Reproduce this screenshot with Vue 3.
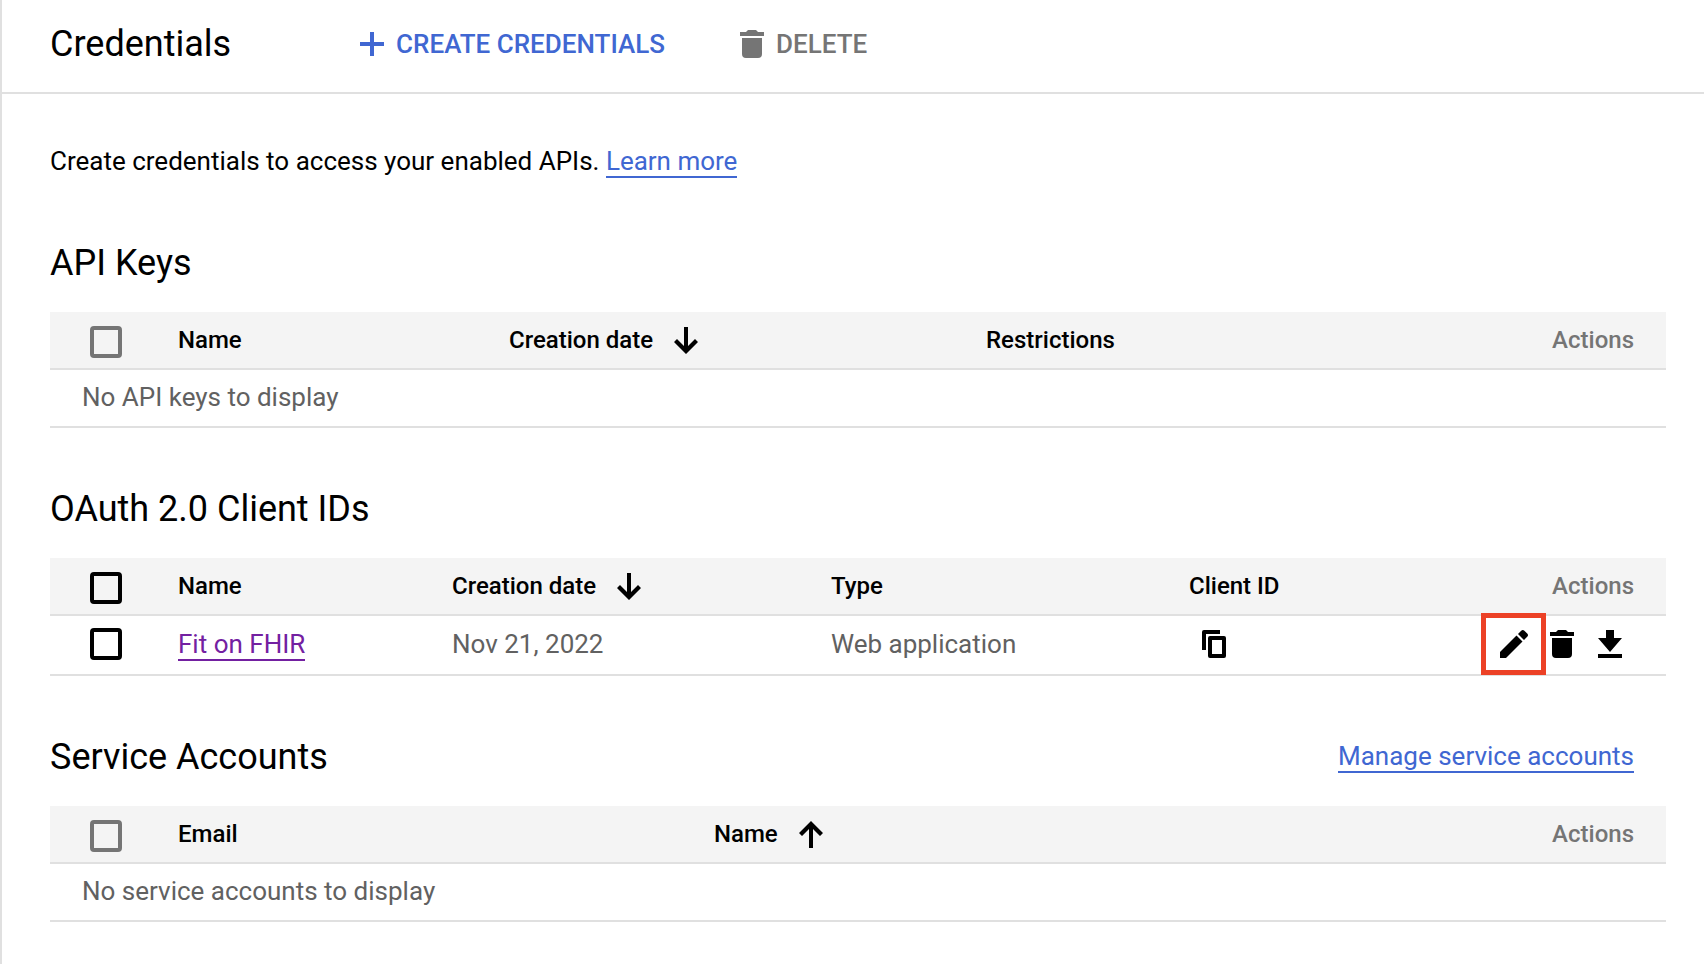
<script setup>
import { ref } from 'vue'

const selectAllClients = ref(false)
const clients = ref([
  { id: 'fit', name: 'Fit on FHIR', created: 'Nov 21, 2022', type: 'Web application', selected: false }
])
const icons = {
  trash: 'M8 0h8l2 2h6v4H0V2h6zM2 8h20v16a4 4 0 0 1-4 4H6a4 4 0 0 1-4-4z',
  download: 'M8 0h8v8h8L12 22 0 8h8zM0 24h24v4H0z',
  copy: 'M18 0v4H4v16H0V2a2 2 0 0 1 2-2zM8 6h14a2 2 0 0 1 2 2v18a2 2 0 0 1-2 2H8a2 2 0 0 1-2-2V8a2 2 0 0 1 2-2zM10 10v14h10V10z',
  pencil: 'M0 22v6h6L22.500 11.500l-6-6zM18 4l3.200-3.200q1.600-1.600 3.200 0l2.800 2.800q1.600 1.600 0 3.200L24 10z',
  down: 'M10 0h4v19l7-7 3 3-12 12L0 15l3-3 7 7z',
  up: 'M10 27h4V8l7 7 3-3L12 0 0 12l3 3 7-7z'
}
</script>

<template>
  <main class="page">
    <header class="toolbar">
      <h1>Credentials</h1>
      <button type="button" class="tool create">
        <svg width="24" height="24" viewBox="0 0 24 24" aria-hidden="true"><path d="M10 0h4v10h10v4H14v10h-4V14H0v-4h10z" /></svg>
        CREATE CREDENTIALS
      </button>
      <button type="button" class="tool delete" disabled>
        <svg width="24" height="28" viewBox="0 0 24 28" aria-hidden="true"><path :d="icons.trash" /></svg>
        DELETE
      </button>
    </header>

    <div class="content">
      <p class="intro">Create credentials to access your enabled APIs. <a href="#learn">Learn more</a></p>

      <section>
        <div class="section-head"><h2>API Keys</h2></div>
        <table>
          <colgroup><col class="check"><col class="key-name"><col class="key-date"><col class="key-rest"><col class="key-actions"></colgroup>
          <thead>
            <tr>
              <th class="pick"><input type="checkbox" aria-label="Select all API keys" disabled></th>
              <th>Name</th>
              <th><button type="button" class="sort">Creation date <svg width="24" height="27" viewBox="0 0 24 27" aria-hidden="true"><path :d="icons.down" /></svg></button></th>
              <th>Restrictions</th>
              <th class="actions">Actions</th>
            </tr>
          </thead>
          <tbody><tr><td class="empty" colspan="5">No API keys to display</td></tr></tbody>
        </table>
      </section>

      <section>
        <div class="section-head"><h2>OAuth 2.0 Client IDs</h2></div>
        <table>
          <colgroup><col class="check"><col class="client-name"><col class="client-date"><col class="client-type"><col class="client-id"><col class="client-actions"></colgroup>
          <thead>
            <tr>
              <th class="pick"><input v-model="selectAllClients" type="checkbox" aria-label="Select all client IDs"></th>
              <th>Name</th>
              <th><button type="button" class="sort">Creation date <svg width="24" height="27" viewBox="0 0 24 27" aria-hidden="true"><path :d="icons.down" /></svg></button></th>
              <th>Type</th>
              <th>Client ID</th>
              <th class="actions">Actions</th>
            </tr>
          </thead>
          <tbody>
            <tr v-for="client in clients" :key="client.id" class="client">
              <td class="pick"><input v-model="client.selected" type="checkbox" :aria-label="'Select ' + client.name"></td>
              <td><a class="visited" href="#client">{{ client.name }}</a></td>
              <td>{{ client.created }}</td>
              <td>{{ client.type }}</td>
              <td class="copy-cell">
                <button type="button" class="icon" aria-label="Copy client ID"><svg width="24" height="28" viewBox="0 0 24 28"><path fill-rule="evenodd" :d="icons.copy" /></svg></button>
              </td>
              <td class="row-actions">
                <div class="icons">
                  <button type="button" class="icon edit" aria-label="Edit"><svg width="28" height="28" viewBox="0 0 28 28"><path :d="icons.pencil" /></svg></button>
                  <button type="button" class="icon" aria-label="Delete"><svg width="24" height="28" viewBox="0 0 24 28"><path :d="icons.trash" /></svg></button>
                  <button type="button" class="icon" aria-label="Download"><svg width="24" height="28" viewBox="0 0 24 28"><path :d="icons.download" /></svg></button>
                </div>
              </td>
            </tr>
          </tbody>
        </table>
      </section>

      <section>
        <div class="section-head">
          <h2>Service Accounts</h2>
          <a href="#manage">Manage service accounts</a>
        </div>
        <table>
          <colgroup><col class="check"><col class="account-email"><col class="account-name"><col class="account-actions"></colgroup>
          <thead>
            <tr>
              <th class="pick"><input type="checkbox" aria-label="Select all service accounts" disabled></th>
              <th>Email</th>
              <th><button type="button" class="sort">Name <svg width="24" height="27" viewBox="0 0 24 27" aria-hidden="true"><path :d="icons.up" /></svg></button></th>
              <th class="actions">Actions</th>
            </tr>
          </thead>
          <tbody><tr><td class="empty" colspan="4">No service accounts to display</td></tr></tbody>
        </table>
      </section>
    </div>
  </main>
</template>

<style>
body { margin: 0; background: #fff; }
</style>

<style scoped>
.page {
  box-sizing: border-box;
  min-height: 100vh;
  border-left: 2px solid #e0e0e0;
  font-family: Roboto, "Liberation Sans", sans-serif;
  font-size: 26px;
  line-height: 32px;
  color: #000;
}
svg { display: block; flex: none; fill: currentColor; }
button { padding: 0; border: 0; background: none; font: inherit; color: inherit; cursor: pointer; }
h1, h2 { margin: 0; font-size: 36px; line-height: 44px; font-weight: 400; }
.toolbar {
  display: flex;
  align-items: center;
  height: 88px;
  padding: 0 48px 4px;
  border-bottom: 2px solid #e0e0e0;
}
.tool { display: flex; align-items: center; gap: 12px; font-weight: 500; white-space: nowrap; }
.create { margin-left: 129px; color: #4067d2; }
.delete { margin-left: 75px; color: #757575; cursor: default; }
.content { padding: 49px 38px 40px 48px; }
.intro { margin: 0; padding-bottom: 3px; line-height: 36px; }
a { color: #4067d2; text-decoration: none; border-bottom: 2px solid currentColor; }
.visited { color: #7320a1; }
section { margin-top: 59px; }
.section-head { display: flex; align-items: center; justify-content: space-between; height: 44px; padding: 0 32px 27px 0; }
.section-head a { line-height: 30px; }
table { width: 100%; table-layout: fixed; border-collapse: separate; border-spacing: 0; }
th, td { box-sizing: border-box; height: 58px; padding: 0; border-bottom: 2px solid #e0e0e0; text-align: left; vertical-align: middle; white-space: nowrap; }
th { background: #f4f4f4; font-size: 24px; font-weight: 500; }
td { padding-bottom: 2px; color: #616161; }
.client td { height: 60px; }
.actions { padding-right: 32px; text-align: right; color: #757575; }
th.pick, td.pick { padding: 4px 0 0 40px; }
.client td.pick { padding: 0 0 2px 40px; }
input {
  display: block;
  box-sizing: border-box;
  width: 32px;
  height: 32px;
  margin: 0;
  border: 4px solid #000;
  border-radius: 4px;
  appearance: none;
}
input:checked { background: #000; }
input:disabled { border-color: #757575; }
.sort { display: flex; align-items: center; gap: 21px; }
td.empty { padding-left: 32px; }
td.copy-cell { padding: 0 0 2px 13px; color: #000; }
td.row-actions { padding: 0 44px 2px 0; color: #000; }
.icons { display: flex; align-items: center; justify-content: flex-end; gap: 24px; }
.icon { display: block; }
.edit { margin: -4px -20px -4px 0; padding: 12px 13px 12px 14px; border: 5px solid #ec4126; }
.check { width: 128px; }
.key-name { width: 331px; }
.key-date { width: 477px; }
.key-rest { width: 480px; }
.key-actions { width: 200px; }
.client-name { width: 274px; }
.client-date { width: 379px; }
.client-type { width: 358px; }
.client-id { width: 277px; }
.client-actions { width: 200px; }
.account-email { width: 536px; }
.account-name { width: 752px; }
.account-actions { width: 200px; }
</style>
